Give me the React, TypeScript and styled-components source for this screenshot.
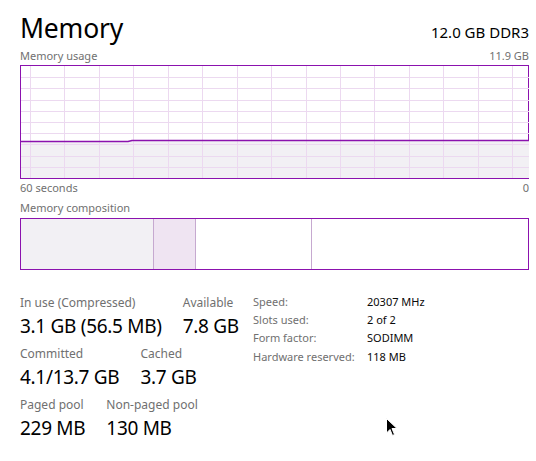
import React from 'react';
import styled, { createGlobalStyle } from 'styled-components';

const GlobalStyle = createGlobalStyle`
  html, body {
    margin: 0;
    padding: 0;
    background: #ffffff;
  }
  body {
    font-family: 'Noto Sans', 'Open Sans', sans-serif;
    color: #000000;
  }
`;

const Page = styled.div`
  position: relative;
  width: 536px;
  height: 461px;
  box-sizing: border-box;
  padding: 10px 7px 0 20px;
  overflow: hidden;
`;

const Header = styled.div`
  display: flex;
  justify-content: space-between;
  align-items: baseline;
`;

const Title = styled.h1`
  margin: 0;
  font-size: 26.5px;
  font-weight: 400;
  line-height: 37px;
  letter-spacing: -0.2px;
`;

const Subtitle = styled.div`
  font-size: 15px;
  line-height: 20px;
`;

const Caption = styled.div<{ $top?: number }>`
  display: flex;
  justify-content: space-between;
  font-size: 11px;
  line-height: 14px;
  color: #707070;
  margin-top: ${(p) => p.$top ?? 0}px;
`;

const ChartBox = styled.div`
  height: 112px;
  border: 1px solid #8b12ae;
  margin-top: 2px;
  background: #ffffff;

  svg {
    display: block;
  }
`;

const CompositionBar = styled.div`
  display: flex;
  height: 50px;
  border: 1px solid #8b12ae;
  margin-top: 3px;
`;

const Segment = styled.div<{ $width: number; $fill: string; $last?: boolean }>`
  flex: 0 0 ${(p) => p.$width}px;
  background: ${(p) => p.$fill};
  border-right: ${(p) => (p.$last ? 'none' : '1px solid #c6a9d0')};
  box-sizing: border-box;

  &:last-child {
    flex: 1 1 auto;
  }
`;

const Details = styled.div`
  display: flex;
  margin-top: 25px;
`;

const StatsColumn = styled.div`
  display: flex;
  flex-direction: column;
  gap: 5px;
  width: 233px;
`;

const StatRow = styled.div`
  display: flex;
  gap: 21px;
`;

const Stat = styled.div`
  display: flex;
  flex-direction: column;
`;

const StatLabel = styled.div`
  font-size: 12px;
  line-height: 16px;
  color: #707070;
  white-space: nowrap;
`;

const StatValue = styled.div`
  font-size: 19px;
  line-height: 30px;
  white-space: nowrap;
  letter-spacing: -0.3px;
`;

const SpecTable = styled.div`
  display: grid;
  grid-template-columns: 114px auto;
  grid-auto-rows: 18.3px;
  align-items: center;
  align-content: start;
  font-size: 11px;
  margin-top: -3px;
`;

const SpecKey = styled.div`
  color: #707070;
  white-space: nowrap;
`;

const SpecValue = styled.div`
  color: #0a0a0a;
  white-space: nowrap;
`;

const Cursor = styled.svg`
  position: absolute;
  left: 386px;
  top: 418px;
`;

const W = 508;
const H = 112;

function UsageChart() {
  const vLines: number[] = [];
  for (let x = 9; x < W; x += 34.45) vLines.push(Math.round(x) + 0.5);
  const hLines: number[] = [];
  for (let i = 1; i < 10; i++) hLines.push(Math.round((H / 10) * i) + 0.5);

  const line = `M0,75.5 L107,75.5 L111,74.5 L${W},74.5`;
  const area = `${line} L${W},${H} L0,${H} Z`;

  return (
    <svg width={W} height={H} viewBox={`0 0 ${W} ${H}`}>
      <path d={area} fill="#f2f0f4" />
      {vLines.map((x) => (
        <line key={`v${x}`} x1={x} y1={0} x2={x} y2={H} stroke="#ecd9f0" strokeWidth={1} />
      ))}
      {hLines.map((y) => (
        <line key={`h${y}`} x1={0} y1={y} x2={W} y2={y} stroke="#ecd9f0" strokeWidth={1} />
      ))}
      <path d={line} fill="none" stroke="#8b12ae" strokeWidth={1.3} />
    </svg>
  );
}

const stats = [
  [
    { label: 'In use (Compressed)', value: '3.1 GB (56.5 MB)' },
    { label: 'Available', value: '7.8 GB' },
  ],
  [
    { label: 'Committed', value: '4.1/13.7 GB' },
    { label: 'Cached', value: '3.7 GB' },
  ],
  [
    { label: 'Paged pool', value: '229 MB' },
    { label: 'Non-paged pool', value: '130 MB' },
  ],
];

const specs = [
  ['Speed:', '20307 MHz'],
  ['Slots used:', '2 of 2'],
  ['Form factor:', 'SODIMM'],
  ['Hardware reserved:', '118 MB'],
];

export default function App() {
  return (
    <>
      <GlobalStyle />
      <Page>
        <Header>
          <Title>Memory</Title>
          <Subtitle>12.0 GB DDR3</Subtitle>
        </Header>
        <Caption $top={2}>
          <span>Memory usage</span>
          <span>11.9 GB</span>
        </Caption>
        <ChartBox>
          <UsageChart />
        </ChartBox>
        <Caption $top={2}>
          <span>60 seconds</span>
          <span>0</span>
        </Caption>
        <Caption $top={6}>
          <span>Memory composition</span>
        </Caption>
        <CompositionBar>
          <Segment $width={133} $fill="#f2f0f4" />
          <Segment $width={42} $fill="#efe4f2" />
          <Segment $width={116} $fill="#ffffff" />
          <Segment $width={0} $fill="#ffffff" $last />
        </CompositionBar>
        <Details>
          <StatsColumn>
            {stats.map((row, i) => (
              <StatRow key={i}>
                {row.map((s) => (
                  <Stat key={s.label}>
                    <StatLabel>{s.label}</StatLabel>
                    <StatValue>{s.value}</StatValue>
                  </Stat>
                ))}
              </StatRow>
            ))}
          </StatsColumn>
          <SpecTable>
            {specs.map(([k, v]) => (
              <React.Fragment key={k}>
                <SpecKey>{k}</SpecKey>
                <SpecValue>{v}</SpecValue>
              </React.Fragment>
            ))}
          </SpecTable>
        </Details>
        <Cursor width="12" height="19" viewBox="0 0 12 19">
          <path d="M0.5,0.5 L0.5,15 L4,11.5 L6.5,17.5 L8.5,16.5 L6,10.5 L11,10.5 Z" fill="#000" stroke="#fff" strokeWidth="1" />
        </Cursor>
      </Page>
    </>
  );
}
